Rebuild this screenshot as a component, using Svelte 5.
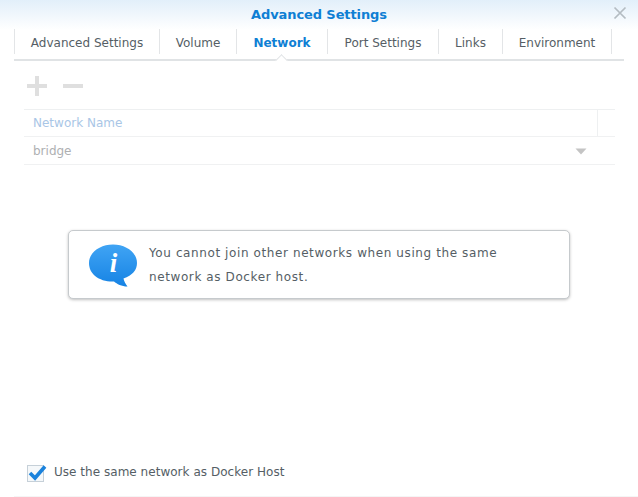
<script>
  const tabs = [
    { label: 'Advanced Settings', w: 145 },
    { label: 'Volume', w: 77 },
    { label: 'Network', w: 91, active: true },
    { label: 'Port Settings', w: 111 },
    { label: 'Links', w: 64 },
    { label: 'Environment', w: 110 }
  ];
</script>

<div class="dialog">
  <header class="title">
    <span>Advanced Settings</span>
    <svg class="close" width="14" height="14" viewBox="0 0 14 14"><path d="M1.5 1.5 12.5 12.5M12.5 1.5 1.5 12.5" stroke="#b4bcc2" stroke-width="1.7" fill="none"/></svg>
  </header>

  <nav class="tabs">
    {#each tabs as t}
      <div class="tab" class:active={t.active} style="width:{t.w}px">{t.label}</div>
    {/each}
  </nav>

  <div class="toolbar">
    <svg width="22" height="22" viewBox="0 0 22 22"><path d="M11 1V21M1 11H21" stroke="#dfdfdf" stroke-width="4" fill="none"/></svg>
    <svg width="22" height="22" viewBox="0 0 22 22"><path d="M1 11H21" stroke="#dfdfdf" stroke-width="4" fill="none"/></svg>
  </div>

  <div class="grid">
    <div class="row head">
      <div class="name">Network Name</div>
      <div class="scroll"></div>
    </div>
    <div class="row body">
      <div class="name">bridge</div>
      <svg class="arrow" width="12" height="7" viewBox="0 0 12 7"><path d="M0.5 0.5H11.5L6 6.5Z" fill="#c4c4c4"/></svg>
    </div>
  </div>

  <div class="msg-wrap">
    <div class="msg">
      <svg class="info" width="48" height="43" viewBox="0 0 48 43">
        <defs>
          <linearGradient id="bub" x1="0" y1="0" x2="0" y2="1">
            <stop offset="0" stop-color="#40a4f4" />
            <stop offset="1" stop-color="#1683e4" />
          </linearGradient>
        </defs>
        <path d="M24 0.500C37 0.500 48 8.500 48 19C48 26 43.500 31.500 34.500 34.500C35 37 36.500 40 38.500 42.500C32.500 42.500 28 40 25 37.500C10 38 0 30 0 19C0 8.500 11 0.500 24 0.500Z" fill="url(#bub)"/>
        <text x="24.500" y="28" class="i">i</text>
      </svg>
      <p>You cannot join other networks when using the same network as Docker host.</p>
    </div>
  </div>

  <label class="check">
    <span class="box">
      <svg width="20" height="18" viewBox="0 0 20 18"><path d="M2 9 7 14 17 2.500" stroke="#1a82dc" stroke-width="3.600" fill="none"/></svg>
    </span>
    <span class="check-text">Use the same network as Docker Host</span>
  </label>
  <div class="foot"></div>
</div>

<style>
  :global(body) { margin: 0; background: #fff; }
  .dialog {
    width: 638px;
    height: 497px;
    box-sizing: border-box;
    overflow: hidden;
    display: flex;
    flex-direction: column;
    font-family: "DejaVu Sans", Verdana, sans-serif;
    font-size: 12px;
    color: #555e65;
    background: #fff;
    background-image: linear-gradient(#e2effa, #fff 30px);
  }
  .title {
    height: 28px;
    flex: none;
    position: relative;
    display: flex;
    align-items: center;
    justify-content: center;
    font-weight: 700;
    font-size: 13px;
    letter-spacing: -0.1px;
    color: #0f7fd4;
  }
  .close { position: absolute; left: 613px; top: 6px; }
  .tabs {
    flex: none;
    display: flex;
    height: 33px;
    margin-left: 14px;
    width: 610px;
    box-sizing: border-box;
    border-bottom: 2px solid #e0e3e5;
  }
  .tab {
    position: relative;
    box-sizing: border-box;
    height: 25px;
    margin-top: 1px;
    padding-top: 2px;
    border-left: 1px solid #e3e5e7;
    display: flex;
    align-items: center;
    justify-content: center;
    white-space: nowrap;
  }
  .tab:last-child { border-right: 1px solid #e3e5e7; }
  .tab.active { color: #0f7fd4; font-weight: 700; }
  .tab.active::after {
    content: "";
    position: absolute;
    left: 40px;
    bottom: -11px;
    width: 8px;
    height: 8px;
    background: #fff;
    border-left: 1px solid #e0e3e5;
    border-top: 1px solid #e0e3e5;
    transform: rotate(45deg);
  }
  .toolbar {
    flex: none;
    display: flex;
    gap: 14px;
    padding: 14px 0 0 26px;
    height: 34px;
  }
  .grid {
    flex: none;
    margin-left: 24px;
    width: 591px;
    border-top: 1px solid #eef0f1;
  }
  .row {
    box-sizing: border-box;
    display: flex;
    align-items: center;
    border-bottom: 1px solid #f0f1f2;
    position: relative;
  }
  .name { padding-left: 9px; flex: 1; }
  .head { color: #a9c6e6; height: 27px; }
  .body { color: #aeb0b2; height: 28px; }
  .scroll { width: 17px; align-self: stretch; border-left: 1px solid #eef0f1; }
  .arrow { position: absolute; left: 551px; top: 11px; }
  .msg-wrap { flex: 1; padding: 65px 0 0 68px; }
  .msg {
    width: 502px;
    height: 69px;
    box-sizing: border-box;
    background: #fff;
    border: 1px solid #c6cacd;
    border-radius: 5px;
    box-shadow: 0 1px 3px rgba(0,0,0,.25);
    display: flex;
    align-items: center;
    padding: 0 20px;
  }
  .info { flex: none; margin-right: 12px; margin-top: 2px; }
  .i {
    font-family: "Liberation Serif", serif;
    font-style: italic;
    font-weight: 700;
    font-size: 27px;
    fill: #fff;
    text-anchor: middle;
  }
  .msg p { margin: 0; line-height: 24px; width: 360px; letter-spacing: 0.6px; }
  .check {
    flex: none;
    display: flex;
    align-items: center;
    gap: 10px;
    padding-left: 27px;
    height: 24px;
    margin-bottom: 12px;
  }
  .check-text { letter-spacing: 0.03px; }
  .box {
    box-sizing: border-box;
    width: 17px;
    height: 17px;
    border: 1px solid #c6d0d8;
    background: #f5f8fa;
    position: relative;
    flex: none;
    margin-top: 2px;
  }
  .box svg { position: absolute; left: 0; top: -2px; }
  .foot { flex: none; height: 1px; margin-left: 14px; background: #f5f5f5; }
</style>
